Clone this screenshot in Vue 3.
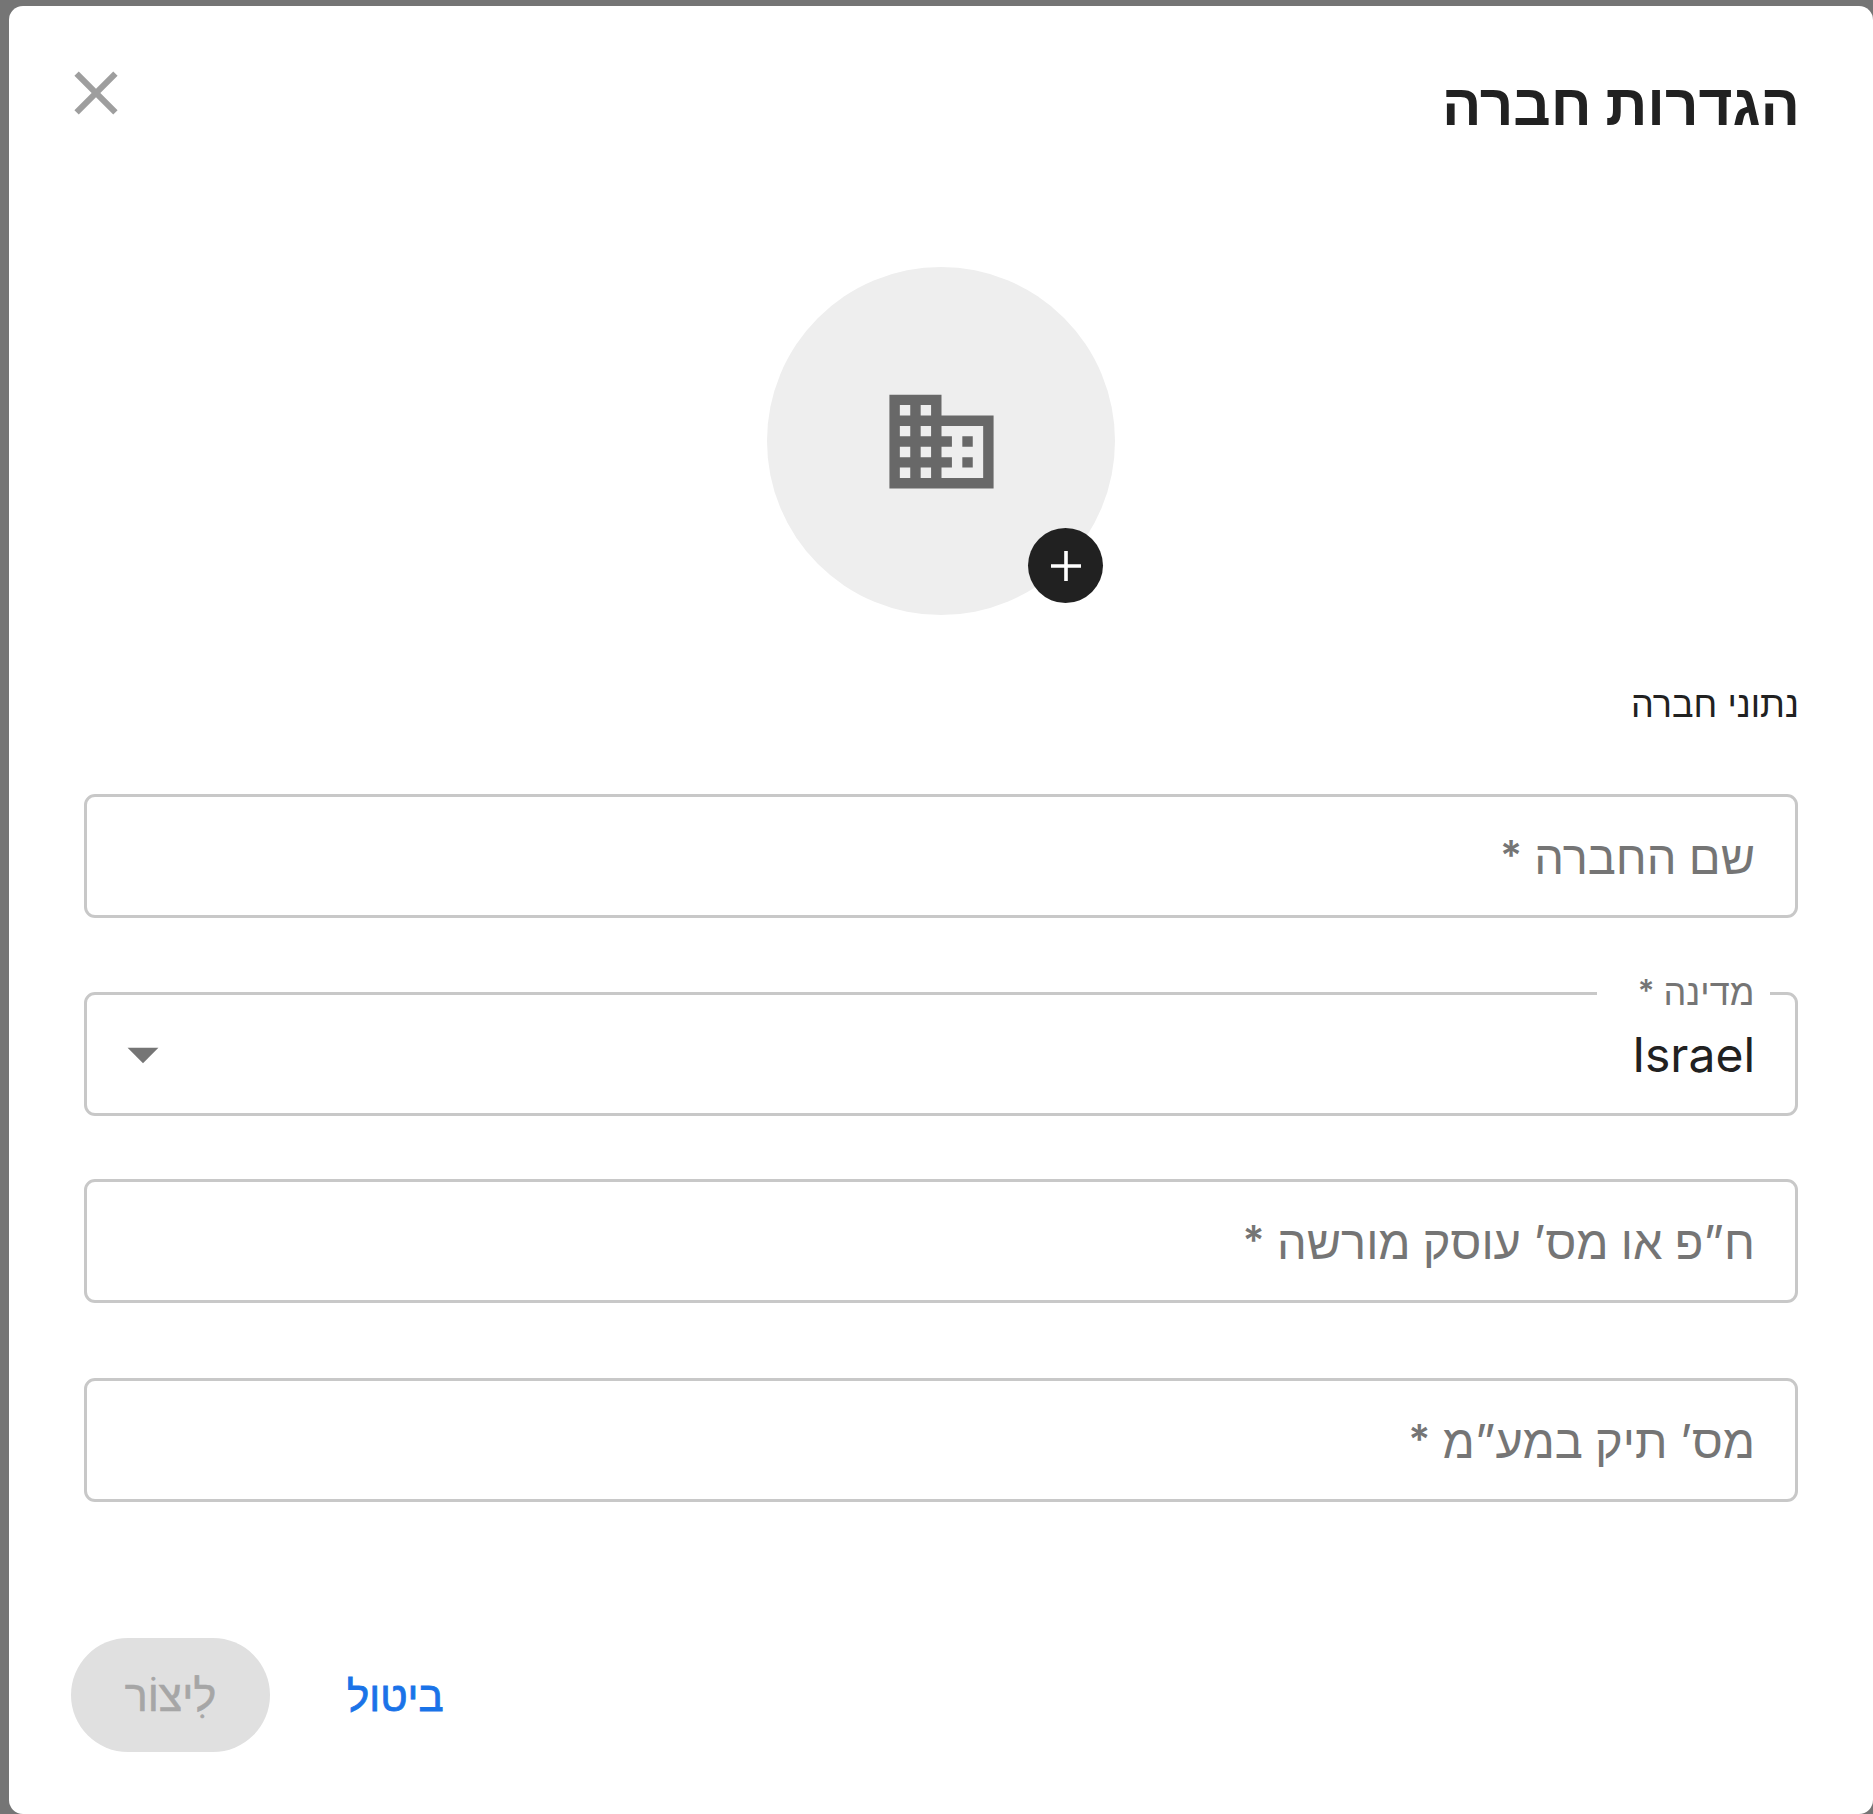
<script setup>
const fields = [
  { id: 'name', label: 'שם החברה', gap: 'gap-first' },
  { id: 'country', label: 'מדינה', value: 'Israel', gap: 'gap-country' },
  { id: 'tax', label: 'ח”פ או מס’ עוסק מורשה', gap: 'gap-tax' },
  { id: 'vat', label: 'מס’ תיק במע”מ', gap: 'gap-vat' }
];
</script>

<template>
  <div class="page">
    <div class="modal" dir="rtl">
      <header class="modal-header">
        <h1 class="title">הגדרות חברה</h1>
        <svg class="close-icon" viewBox="0 0 24 24">
          <path d="M19 6.41 17.59 5 12 10.59 6.41 5 5 6.41 10.59 12 5 17.59 6.41 19 12 13.41 17.59 19 19 17.59 13.41 12z" />
        </svg>
      </header>

      <div class="avatar-row">
        <div class="avatar">
          <svg class="building-icon" viewBox="0 0 24 24">
            <path d="M12 7V3H2v18h20V7H12zM6 19H4v-2h2v2zm0-4H4v-2h2v2zm0-4H4V9h2v2zm0-4H4V5h2v2zm4 12H8v-2h2v2zm0-4H8v-2h2v2zm0-4H8V9h2v2zm0-4H8V5h2v2zm10 12h-8v-2h2v-2h-2v-2h2v-2h-2V9h8v10zm-2-8h-2v2h2v-2zm0 4h-2v2h2v-2z" />
          </svg>
          <div class="add-badge">
            <svg class="plus-icon" viewBox="0 0 30 30">
              <path d="M13.2 0h3.6v13.2H30v3.6H16.8V30h-3.6V16.8H0v-3.6h13.2z" />
            </svg>
          </div>
        </div>
      </div>

      <div class="section-label">נתוני חברה</div>

      <div v-for="field in fields" :key="field.id" class="field" :class="[field.gap, { filled: field.value }]">
        <span class="field-label">{{ field.label }} <span class="required">*</span></span>
        <span v-if="field.value" class="field-value">{{ field.value }}</span>
        <svg v-if="field.value" class="arrow-icon" viewBox="0 0 24 24">
          <path d="m7 10 5 5 5-5z" />
        </svg>
      </div>

      <footer class="actions">
        <button class="cancel-btn">ביטול</button>
        <button class="create-btn" disabled>לִיצוֹר</button>
      </footer>
    </div>
  </div>
</template>

<style>
html, body {
  margin: 0;
  background: #757575;
  overflow: hidden;
}
</style>

<style scoped>
.page {
  height: 1814px;
  box-sizing: border-box;
  padding: 6px 0 0 9px;
  background: #757575;
  overflow: hidden;
  font-family: Inter, "Liberation Sans", sans-serif;
}

.modal {
  height: 1808px;
  box-sizing: border-box;
  padding: 0 75px;
  background: #fff;
  border-radius: 14px;
  color: #212121;
}

.modal-header {
  display: flex;
  justify-content: space-between;
  align-items: flex-start;
  height: 261px;
}

.title {
  margin: 66px -2px 0 0;
  font-size: 58.4px;
  line-height: 64px;
  font-weight: 700;
}

.close-icon {
  width: 74px;
  height: 74px;
  margin: 50px 0 0 -25px;
  fill: #9e9e9e;
}

.avatar-row {
  display: flex;
  justify-content: center;
}

.avatar {
  position: relative;
  display: flex;
  align-items: center;
  justify-content: center;
  width: 348px;
  height: 348px;
  border-radius: 50%;
  background: #eee;
}

.building-icon {
  width: 125px;
  height: 125px;
  fill: #686868;
}

.add-badge {
  position: absolute;
  left: 261px;
  top: 261px;
  display: flex;
  align-items: center;
  justify-content: center;
  width: 75px;
  height: 75px;
  border-radius: 50%;
  background: #212121;
}

.plus-icon {
  width: 30px;
  height: 30px;
  fill: #fff;
}

.section-label {
  margin: 68px -1px 0 0;
  font-size: 36px;
  line-height: 42px;
  color: #212121;
}

.field {
  position: relative;
  display: flex;
  align-items: center;
  justify-content: space-between;
  height: 124px;
  box-sizing: border-box;
  padding: 1px 40px 0;
  border: 3px solid #c8c8c8;
  border-radius: 11px;
  font-size: 47px;
  word-spacing: -1px;
  color: #757575;
}

.gap-first { margin-top: 69px; }
.gap-country { margin-top: 74px; }
.gap-tax { margin-top: 63px; }
.gap-vat { margin-top: 75px; }

.required {
  font-size: 41px;
  font-weight: 600;
  vertical-align: 4px;
}

.filled {
  padding: 0 40px 0 19px;
}

.filled .field-label {
  position: absolute;
  right: 24.6px;
  top: -25px;
  box-sizing: border-box;
  width: 173px;
  padding-right: 16px;
  background: #fff;
  font-size: 36px;
  line-height: 42px;
  word-spacing: -1px;
}

.filled .required {
  font-size: 31px;
  vertical-align: 3px;
}

.field-value {
  font-family: Inter, sans-serif;
  font-size: 48px;
  color: #212121;
}

.arrow-icon {
  width: 74px;
  height: 74px;
  fill: #757575;
}

.actions {
  display: flex;
  align-items: center;
  gap: 52px;
  height: 114px;
  margin: 136px 0 0 -13px;
}

button {
  border: 0;
  background: none;
  padding: 0;
  font-family: inherit;
}

.cancel-btn {
  padding: 0 25px;
  margin-right: auto;
  font-size: 42px;
  color: #1a73e8;
  font-weight: 500;
  -webkit-text-stroke: 0.8px #1a73e8;
}

.create-btn {
  width: 199px;
  height: 114px;
  border-radius: 57px;
  background: #e0e0e0;
  font-size: 43px;
  color: #a6a6a6;
  -webkit-text-stroke: 0.6px #a6a6a6;
}
</style>
